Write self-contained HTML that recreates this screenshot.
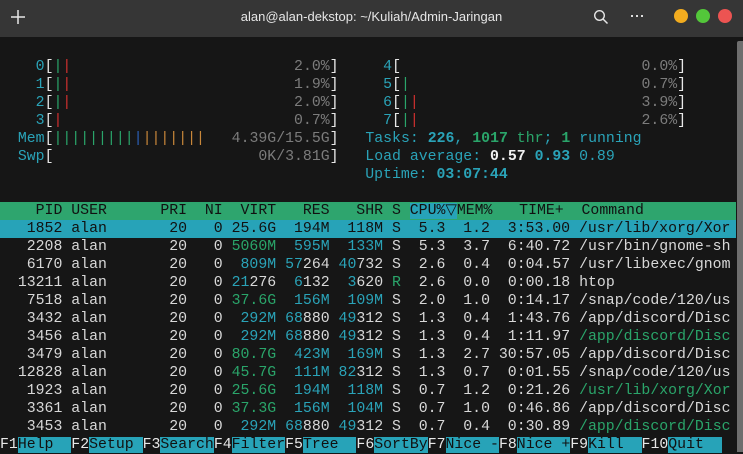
<!DOCTYPE html>
<html><head><meta charset="utf-8"><style>
*{margin:0;padding:0;box-sizing:border-box}
body{width:743px;height:452px;background:#161616;overflow:hidden;position:relative;font-family:"Liberation Mono",monospace;font-size:14.85px;color:#d8d8d8}
#tb{position:absolute;left:0;top:0;width:743px;height:37px;background:#363636}
#title{position:absolute;left:0;top:0;width:743px;height:37px;line-height:33px;text-align:center;font-family:"Liberation Sans",sans-serif;font-size:13px;color:#e6e6e6;padding-left:0}
.dot{position:absolute;top:9px;width:14px;height:14px;border-radius:50%}
#sb{position:absolute;left:737px;top:41px;width:6px;height:411px;background:#6e6e6e;border-radius:2px 0 0 0}
.l{position:absolute;left:0;height:18px;line-height:18px;white-space:pre;width:736px;overflow:hidden}
.c{color:#2aa3b8}.g{color:#2aa56a}.r{color:#d0302f}.o{color:#c8873a}.bl{color:#2b5fb8}
.w{color:#f0f0f0;font-weight:bold}.d{color:#7c7c7c}.bc{color:#2aa3b8;font-weight:bold}.bg{color:#2aa56a;font-weight:bold}
.br{color:#e8e8e8}
.hdr{background:#2ea56e;color:#111}
.sel{background:#27a3b8;color:#111}
.fk{color:#e8e8e8}.fl{background:#27a3b8;color:#111}
</style></head><body>
<div id="tb"></div>
<div id="title">alan@alan-dekstop: ~/Kuliah/Admin-Jaringan</div>
<svg style="position:absolute;left:10px;top:9px" width="16" height="16"><path d="M8 1v14M1 8h14" stroke="#e6e6e6" stroke-width="1.5"/></svg>
<svg style="position:absolute;left:593px;top:9px" width="16" height="16"><circle cx="6.5" cy="6.5" r="4.8" fill="none" stroke="#e6e6e6" stroke-width="1.4"/><path d="M10 10l4.5 4.5" stroke="#e6e6e6" stroke-width="1.5"/></svg>
<div style="position:absolute;left:631px;top:15px;width:2px;height:2px;background:#ddd;box-shadow:5px 0 #ddd,10px 0 #ddd"></div>
<div class="dot" style="left:674px;background:#f2ac1f"></div>
<div class="dot" style="left:696px;background:#53c73a"></div>
<div class="dot" style="left:718px;background:#ec5452"></div>
<div id="sb"></div>

<div class="l" style="top:58px">    <span class="c">0</span><span class="br">[</span><span class="g">|</span><span class="r">|</span>                         <span class="d">2.0%</span><span class="br">]</span>   <span class="c">  4</span><span class="br">[</span>                           <span class="d">0.0%</span><span class="br">]</span></div>
<div class="l" style="top:76px">    <span class="c">1</span><span class="br">[</span><span class="g">|</span><span class="r">|</span>                         <span class="d">1.9%</span><span class="br">]</span>   <span class="c">  5</span><span class="br">[</span><span class="g">|</span>                          <span class="d">0.7%</span><span class="br">]</span></div>
<div class="l" style="top:94px">    <span class="c">2</span><span class="br">[</span><span class="g">|</span><span class="r">|</span>                         <span class="d">2.0%</span><span class="br">]</span>   <span class="c">  6</span><span class="br">[</span><span class="g">|</span><span class="r">|</span>                         <span class="d">3.9%</span><span class="br">]</span></div>
<div class="l" style="top:112px">    <span class="c">3</span><span class="br">[</span><span class="r">|</span>                          <span class="d">0.7%</span><span class="br">]</span>   <span class="c">  7</span><span class="br">[</span><span class="g">|</span><span class="r">|</span>                         <span class="d">2.6%</span><span class="br">]</span></div>
<div class="l" style="top:130px">  <span class="c">Mem</span><span class="br">[</span><span class="g">|||||||||</span><span class="bl">|</span><span class="o">|||||||</span>   <span class="d">4.39G/15.5G</span><span class="br">]</span>   <span class="c">Tasks: </span><span class="bc">226</span><span class="c">, </span><span class="bg">1017</span><span class="g"> thr</span><span class="c">; </span><span class="bg">1</span><span class="c"> running</span></div>
<div class="l" style="top:148px">  <span class="c">Swp</span><span class="br">[</span>                       <span class="d">0K/3.81G</span><span class="br">]</span>   <span class="c">Load average: </span><span class="w">0.57 </span><span class="bc">0.93 </span><span class="c">0.89</span></div>
<div class="l" style="top:166px">                                         <span class="c">Uptime: </span><span class="bc">03:07:44</span></div>

<div class="l hdr" style="top:202px">    PID USER      PRI  NI  VIRT   RES   SHR S <span class="sel">CPU%▽</span>MEM%   TIME+  Command</div>
<div class="l sel" style="top:220px">   1852 alan       20   0 25.6G  194M  118M S  5.3  1.2  3:53.00 /usr/lib/xorg/Xor</div>
<div class="l" style="top:238px">   2208 alan       20   0 <span class="g">5060M</span>  <span class="c">595M</span>  <span class="c">133M</span> S  5.3  3.7  6:40.72 /usr/bin/gnome-sh</div>
<div class="l" style="top:256px">   6170 alan       20   0  <span class="c">809M</span> <span class="c">57</span>264 <span class="c">40</span>732 S  2.6  0.4  0:04.57 /usr/libexec/gnom</div>
<div class="l" style="top:274px">  13211 alan       20   0 <span class="c">21</span>276  <span class="c">6</span>132  <span class="c">3</span>620 <span class="g">R</span>  2.6  0.0  0:00.18 htop</div>
<div class="l" style="top:292px">   7518 alan       20   0 <span class="g">37.6G</span>  <span class="c">156M</span>  <span class="c">109M</span> S  2.0  1.0  0:14.17 /snap/code/120/us</div>
<div class="l" style="top:310px">   3432 alan       20   0  <span class="c">292M</span> <span class="c">68</span>880 <span class="c">49</span>312 S  1.3  0.4  1:43.76 /app/discord/Disc</div>
<div class="l" style="top:328px">   3456 alan       20   0  <span class="c">292M</span> <span class="c">68</span>880 <span class="c">49</span>312 S  1.3  0.4  1:11.97 <span class="g">/app/discord/Disc</span></div>
<div class="l" style="top:346px">   3479 alan       20   0 <span class="g">80.7G</span>  <span class="c">423M</span>  <span class="c">169M</span> S  1.3  2.7 30:57.05 /app/discord/Disc</div>
<div class="l" style="top:364px">  12828 alan       20   0 <span class="g">45.7G</span>  <span class="c">111M</span> <span class="c">82</span>312 S  1.3  0.7  0:01.55 /snap/code/120/us</div>
<div class="l" style="top:382px">   1923 alan       20   0 <span class="g">25.6G</span>  <span class="c">194M</span>  <span class="c">118M</span> S  0.7  1.2  0:21.26 <span class="g">/usr/lib/xorg/Xor</span></div>
<div class="l" style="top:400px">   3361 alan       20   0 <span class="g">37.3G</span>  <span class="c">156M</span>  <span class="c">104M</span> S  0.7  1.0  0:46.86 /app/discord/Disc</div>
<div class="l" style="top:418px">   3453 alan       20   0  <span class="c">292M</span> <span class="c">68</span>880 <span class="c">49</span>312 S  0.7  0.4  0:30.89 <span class="g">/app/discord/Disc</span></div>
<div class="l" style="top:436px"><span class="fk">F1</span><span class="fl">Help  </span><span class="fk">F2</span><span class="fl">Setup </span><span class="fk">F3</span><span class="fl">Search</span><span class="fk">F4</span><span class="fl">Filter</span><span class="fk">F5</span><span class="fl">Tree  </span><span class="fk">F6</span><span class="fl">SortBy</span><span class="fk">F7</span><span class="fl">Nice -</span><span class="fk">F8</span><span class="fl">Nice +</span><span class="fk">F9</span><span class="fl">Kill  </span><span class="fk">F10</span><span class="fl">Quit  </span></div>
</body></html>
